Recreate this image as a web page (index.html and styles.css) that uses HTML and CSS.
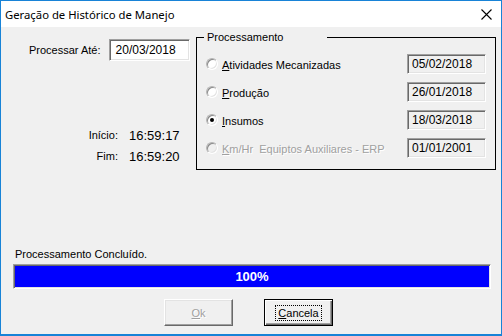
FILE: index.html
```html
<!DOCTYPE html>
<html lang="pt-BR">
<head>
    <meta charset="UTF-8">
    <title>Geração de Histórico de Manejo</title>
    <link rel="stylesheet" href="styles.css">
</head>
<body>
    <div class="window">
        <div class="titlebar">
            <span class="title">Geração de Histórico de Manejo</span>
            <svg class="close" width="11" height="11" viewBox="0 0 11 11">
                <path d="M0.5 0.5 L10.5 10.5 M10.5 0.5 L0.5 10.5" stroke="#000" stroke-width="1.1" fill="none"/>
            </svg>
        </div>

        <div class="content">
            <div class="top">
                <div class="left">
                    <div class="until">
                        <label>Processar Até:</label>
                        <div class="field">20/03/2018</div>
                    </div>
                    <div class="times">
                        <span class="tlabel">Início:</span><span class="tvalue">16:59:17</span>
                        <span class="tlabel">Fim:</span><span class="tvalue">16:59:20</span>
                    </div>
                </div>

                <fieldset class="group">
                    <legend>Processamento</legend>
                    <div class="option">
                        <span class="radio"></span>
                        <span class="opt-label"><u>A</u>tividades Mecanizadas</span>
                        <span class="date">05/02/2018</span>
                    </div>
                    <div class="option">
                        <span class="radio"></span>
                        <span class="opt-label"><u>P</u>rodução</span>
                        <span class="date">26/01/2018</span>
                    </div>
                    <div class="option">
                        <span class="radio checked"></span>
                        <span class="opt-label"><u>I</u>nsumos</span>
                        <span class="date">18/03/2018</span>
                    </div>
                    <div class="option disabled">
                        <span class="radio"></span>
                        <span class="opt-label"><u>K</u>m/Hr&nbsp; Equiptos Auxiliares - ERP</span>
                        <span class="date">01/01/2001</span>
                    </div>
                </fieldset>
            </div>

            <div class="status">Processamento Concluído.</div>
            <div class="progress">
                <div class="bar" style="width: 100%">100%</div>
            </div>

            <div class="buttons">
                <button class="btn" disabled><u>O</u>k</button>
                <button class="btn default"><span class="focus"><u>C</u>ancela</span></button>
            </div>
        </div>
    </div>
</body>
</html>
```

FILE: styles.css
```css
html, body {
    margin: 0;
    padding: 0;
}

body {
    font-family: "Liberation Sans", Arial, sans-serif;
    font-size: 11px;
    color: #000;
    background: #fff;
}

.window {
    width: 502px;
    height: 336px;
    box-sizing: border-box;
    border: 1px solid #1883d7;
    border-bottom-width: 2px;
    display: flex;
    flex-direction: column;
}

.titlebar {
    height: 26px;
    background: #fff;
    display: flex;
    align-items: center;
    justify-content: space-between;
    padding: 0 9px 0 4px;
}

.title {
    font-family: "Noto Sans", "Open Sans", sans-serif;
    font-size: 11.3px;
}

.content {
    flex: 1;
    background: #f0f0f0;
}

.top {
    display: flex;
    padding-top: 4px;
}

.left {
    width: 195px;
}

.until {
    display: flex;
    align-items: center;
    gap: 8px;
    padding-left: 28px;
    margin-top: 8px;
}

.field {
    width: 81px;
    height: 22px;
    box-sizing: border-box;
    background: #fff;
    border: 1px solid;
    border-color: #a0a0a0 #fff #fff #a0a0a0;
    box-shadow: inset 1px 1px 0 #696969, inset -1px -1px 0 #e3e3e3;
    font-size: 12px;
    line-height: 20px;
    padding-left: 6px;
}

.times {
    display: grid;
    grid-template-columns: 117px auto;
    column-gap: 11px;
    margin-top: 64px;
    line-height: 21px;
}

.tlabel {
    text-align: right;
}

.tvalue {
    font-size: 13px;
}

.group {
    margin: 0;
    width: 300px;
    box-sizing: border-box;
    min-width: 0;
    border: 1px solid #000;
    padding: 6px 9px 7px 9px;
}

.group legend {
    width: 123px;
    box-sizing: border-box;
    margin-left: -2px;
    padding: 0 0 0 3px;
    line-height: 13px;
}

.option {
    display: flex;
    align-items: center;
    height: 28px;
}

.radio {
    width: 12px;
    height: 12px;
    box-sizing: border-box;
    border-radius: 50%;
    border: 1px solid;
    border-color: #b4b4b4 #fff #fff #b4b4b4;
    box-shadow: inset 1px 1px 0 #8a8a8a, inset -1px -1px 0 #e3e3e3;
    background: #fff;
    margin-right: 4px;
    position: relative;
}

.radio.checked::after {
    content: "";
    position: absolute;
    left: 3px;
    top: 3px;
    width: 4px;
    height: 4px;
    border-radius: 50%;
    background: #000;
}

.opt-label {
    padding-top: 1px;
}

.disabled .radio {
    background: #f0f0f0;
}

.disabled .opt-label {
    color: #a0a0a0;
    text-shadow: 1px 1px 0 #fff;
}

.date {
    margin-left: auto;
    width: 79px;
    height: 20px;
    box-sizing: border-box;
    border: 1px solid;
    border-color: #a0a0a0 #fff #fff #a0a0a0;
    box-shadow: inset 1px 1px 0 #696969, inset -1px -1px 0 #e3e3e3;
    font-size: 12px;
    line-height: 18px;
    padding-left: 4px;
}

.status {
    margin-top: 78px;
    padding-left: 14px;
    line-height: 13px;
}

.progress {
    margin: 3px 0 0 12px;
    width: 478px;
    height: 25px;
    box-sizing: border-box;
    border: 1px solid;
    border-color: #a0a0a0 #fff #fff #a0a0a0;
    box-shadow: inset 1px 1px 0 #696969, inset -1px -1px 0 #e3e3e3;
    padding: 1px;
}

.bar {
    height: 100%;
    background: #0000ff;
    color: #fff;
    font-weight: bold;
    font-size: 13px;
    line-height: 21px;
    text-align: center;
}

.buttons {
    display: flex;
    gap: 31px;
    padding-left: 163px;
    margin-top: 10px;
}

.btn {
    width: 69px;
    height: 27px;
    padding: 0;
    background: #f0f0f0;
    font-family: "Liberation Sans", Arial, sans-serif;
    font-size: 11px;
    color: #000;
    border: 1px solid;
    border-color: #fff #696969 #696969 #fff;
    box-shadow: inset -1px -1px 0 #a0a0a0, inset 1px 1px 0 #e3e3e3;
}

.btn:disabled {
    color: #a0a0a0;
    text-shadow: 1px 1px 0 #fff;
}

.btn.default {
    border-color: #000;
    box-shadow: inset 1px 1px 0 #fff, inset -1px -1px 0 #696969, inset -2px -2px 0 #a0a0a0;
}

.focus {
    display: inline-block;
    outline: 1px dotted #000;
    padding: 1px 2px;
}
```
